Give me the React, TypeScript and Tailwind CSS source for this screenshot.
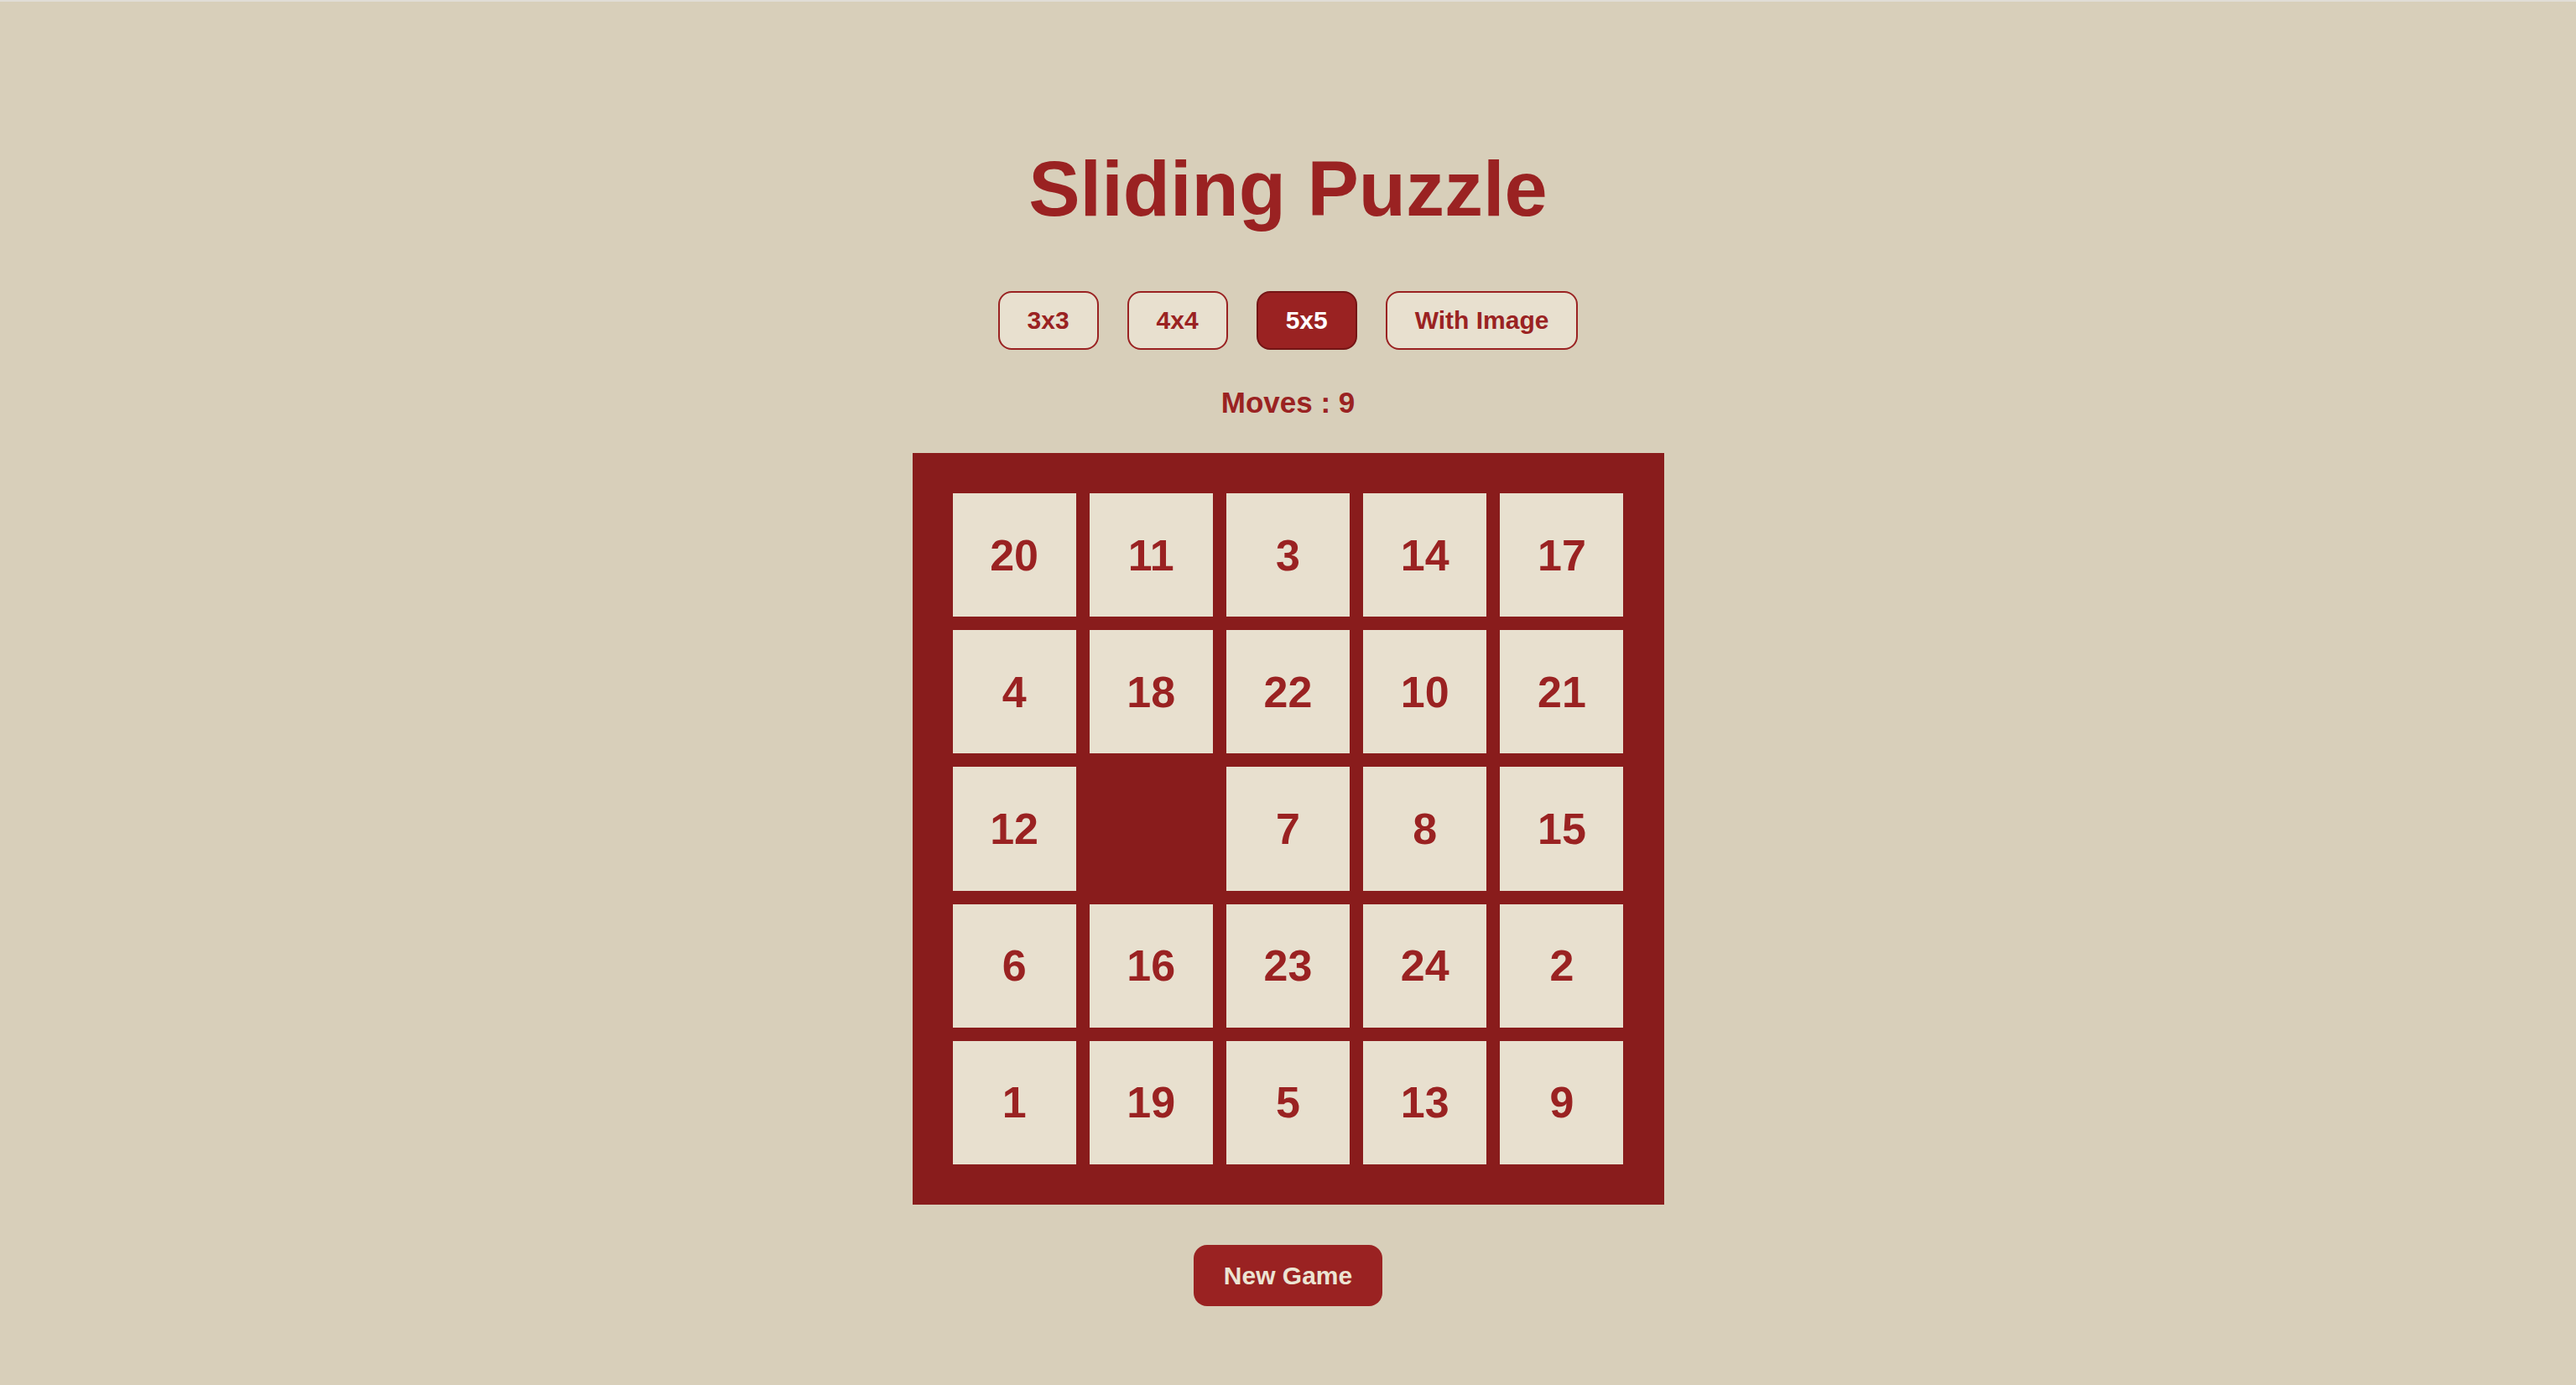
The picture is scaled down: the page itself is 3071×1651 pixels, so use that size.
import React from "react";

const tiles: (number | null)[] = [
  20, 11, 3, 14, 17,
  4, 18, 22, 10, 21,
  12, null, 7, 8, 15,
  6, 16, 23, 24, 2,
  1, 19, 5, 13, 9,
];

const sizes = ["3x3", "4x4", "5x5", "With Image"];

export default function App() {
  return (
    <div className="min-h-screen w-full bg-[#d8cfba] border-t-2 border-[#e0ddd6] flex flex-col items-center font-['Liberation_Sans',Arial,sans-serif] font-bold text-[#9a2222]">
      <h1 className="mt-[177px] text-[92px] leading-none font-bold">Sliding Puzzle</h1>

      <div className="mt-[76px] flex gap-[34px]">
        {sizes.map((s) => {
          const active = s === "5x5";
          return (
            <button
              key={s}
              className={
                active
                  ? "h-[70px] px-[33px] rounded-[16px] border-2 border-[#741515] bg-[#9a2222] text-[#ffffff] text-[30px] leading-none font-bold"
                  : "h-[70px] px-[33px] rounded-[16px] border-2 border-[#9a2222] bg-[#e8e0cf] text-[#9a2222] text-[30px] leading-none font-bold"
              }
            >
              {s}
            </button>
          );
        })}
      </div>

      <div className="mt-[45px] text-[35px] leading-none">Moves : 9</div>

      <div className="mt-[43px] w-[896px] h-[896px] bg-[#891c1c] p-[48px] grid grid-cols-5 grid-rows-5 gap-[16px]">
        {tiles.map((t, i) =>
          t === null ? (
            <div key={i} />
          ) : (
            <div
              key={i}
              className="bg-[#e8e0cf] flex items-center justify-center text-[52px] leading-none text-[#9a2222]"
            >
              {t}
            </div>
          )
        )}
      </div>

      <button className="mt-[48px] w-[225px] h-[73px] rounded-[16px] bg-[#9a2222] text-[#ece4d3] text-[30px] leading-none font-bold">
        New Game
      </button>
    </div>
  );
}
